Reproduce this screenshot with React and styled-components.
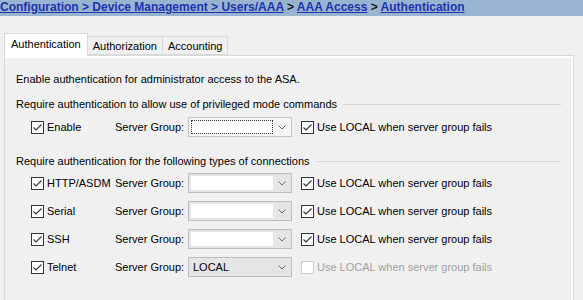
import React from "react";
import styled, { createGlobalStyle } from "styled-components";

const Global = createGlobalStyle`
  html, body { margin: 0; padding: 0; background: #f0f0f0; }
  body { font-family: "Liberation Sans", Arial, sans-serif; font-size: 11px; color: #000; }
  * { box-sizing: border-box; }
`;

const Page = styled.div`
  width: 583px;
  height: 300px;
  overflow: hidden;
  background: #f0f0f0;
`;

const Breadcrumb = styled.div`
  height: 16px;
  background: #99b4d1;
  font-family: "Liberation Sans", Arial, sans-serif;
  font-weight: bold;
  font-size: 12px;
  line-height: 15px;
  white-space: nowrap;
  color: #1a1a1a;
`;

const Crumb = styled.a`
  color: #1d33ad;
  text-decoration: underline;
`;

const TabStrip = styled.div`
  display: flex;
  align-items: flex-end;
  margin: 17px 0 0 4px;
  height: 22px;
  position: relative;
  z-index: 1;
`;

const Tab = styled.div`
  height: ${(p) => (p.$active ? "23px" : "19px")};
  margin-bottom: ${(p) => (p.$active ? "-1px" : "0")};
  padding: ${(p) => (p.$active ? "0 6px 2px 6px" : "0 5px")};
  margin-left: ${(p) => (p.$first ? "0" : "-1px")};
  background: ${(p) => (p.$active ? "#ffffff" : "#f0f0f0")};
  border: 1px solid #d9d9d9;
  border-bottom: ${(p) => (p.$active ? "none" : "1px solid #d9d9d9")};
  font-size: 11px;
  display: flex;
  align-items: center;
  color: #000;
  white-space: nowrap;
`;

const Panel = styled.div`
  margin-left: 4px;
  width: 570px;
  height: 245px;
  border: 1px solid #d9d9d9;
  border-bottom: none;
  background: #ffffff;
  padding: 2px 2px 0 0;
`;

const PanelInner = styled.div`
  height: 100%;
  background: #f0f0f0;
  border-right: 1px solid #e6e6e6;
  padding: 13px 0 0 11px;
  display: flex;
  flex-direction: column;
`;

const Intro = styled.div`
  height: 16px;
  line-height: 16px;
  white-space: nowrap;
`;

const SectionTitle = styled.div`
  display: flex;
  align-items: center;
  height: 16px;
  line-height: 16px;
  margin-top: ${(p) => p.$mt}px;
  padding-right: 9px;
  white-space: nowrap;
  &::after {
    content: "";
    flex: 1;
    height: 1px;
    margin-left: 6px;
    background: #d5d5d5;
  }
`;

const Rows = styled.div`
  display: flex;
  flex-direction: column;
  gap: 8px;
  margin-top: ${(p) => p.$mt}px;
  padding-left: 15px;
`;

const Row = styled.div`
  display: grid;
  grid-template-columns: 84px 73px 104px auto;
  align-items: center;
  height: 20px;
`;

const CheckLabel = styled.label`
  display: flex;
  align-items: center;
  gap: 3px;
  white-space: nowrap;
  color: ${(p) => (p.$disabled ? "#a0a0a0" : "#000")};
  margin-left: ${(p) => p.$ml || 0}px;
`;

const Box = styled.span`
  width: 13px;
  height: 13px;
  border: 1px solid ${(p) => (p.$disabled ? "#cccccc" : "#333333")};
  background: #ffffff;
  display: inline-flex;
  align-items: center;
  justify-content: center;
  flex: none;
`;

const FieldLabel = styled.span`
  white-space: nowrap;
`;

const Combo = styled.div`
  width: 104px;
  height: 20px;
  border: 1px solid ${(p) => (p.$focus ? "#c4c4c4" : "#bdbdbd")};
  background: ${(p) => (p.$focus ? "#f6f6f6" : "#e5e5e5")};
  display: flex;
  align-items: center;
  padding: 2px 0 2px 2px;
`;

const ComboText = styled.div`
  width: 82px;
  height: 100%;
  background: ${(p) => (p.$plain ? "transparent" : "#ffffff")};
  display: flex;
  align-items: center;
  padding-left: 2px;
  border: ${(p) => (p.$focus ? "1px dotted #333" : "none")};
`;

const Arrow = styled.div`
  flex: 1;
  display: flex;
  align-items: center;
  justify-content: center;
`;

const Check = () => (
  <svg width="11" height="11" viewBox="0 0 11 11">
    <path d="M1.5 5.5 L4 8 L9.5 2.5" fill="none" stroke="#333" strokeWidth="1.1" />
  </svg>
);

const CheckBox = ({ checked, disabled }) => (
  <Box $disabled={disabled}>{checked && <Check />}</Box>
);

const Chevron = () => (
  <svg width="8" height="5" viewBox="0 0 8 5">
    <path d="M0.5 0.5 L4 4 L7.5 0.5" fill="none" stroke="#666" strokeWidth="1" />
  </svg>
);

const ServerRow = ({ label, value, focus, localChecked = true, localDisabled }) => (
  <Row>
    <CheckLabel>
      <CheckBox checked />
      {label}
    </CheckLabel>
    <FieldLabel>Server Group:</FieldLabel>
    <Combo $focus={focus}>
      <ComboText $focus={focus} $plain={!!value}>{value}</ComboText>
      <Arrow>
        <Chevron />
      </Arrow>
    </Combo>
    <CheckLabel $ml={9} $disabled={localDisabled}>
      <CheckBox checked={localChecked} disabled={localDisabled} />
      Use LOCAL when server group fails
    </CheckLabel>
  </Row>
);

export default function App() {
  return (
    <Page>
      <Global />
      <Breadcrumb>
        <Crumb>Configuration &gt; Device Management &gt; Users/AAA</Crumb> &gt;{" "}
        <Crumb>AAA Access</Crumb> &gt; <Crumb>Authentication</Crumb>
      </Breadcrumb>
      <TabStrip>
        <Tab $active $first>Authentication</Tab>
        <Tab>Authorization</Tab>
        <Tab>Accounting</Tab>
      </TabStrip>
      <Panel>
        <PanelInner>
          <Intro>Enable authentication for administrator access to the ASA.</Intro>
          <SectionTitle $mt={9}>Require authentication to allow use of privileged mode commands</SectionTitle>
          <Rows $mt={5}>
            <ServerRow label="Enable" focus />
          </Rows>
          <SectionTitle $mt={16}>Require authentication for the following types of connections</SectionTitle>
          <Rows $mt={4}>
            <ServerRow label="HTTP/ASDM" />
            <ServerRow label="Serial" />
            <ServerRow label="SSH" />
            <ServerRow label="Telnet" value="LOCAL" localChecked={false} localDisabled />
          </Rows>
        </PanelInner>
      </Panel>
    </Page>
  );
}
